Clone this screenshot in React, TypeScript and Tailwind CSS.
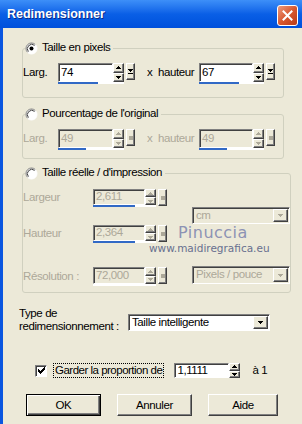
import type { ReactNode } from 'react';

const SUNKEN =
  'border border-t-[#808080] border-l-[#808080] border-r-white border-b-white shadow-[inset_1px_1px_0_#404040]';
const RAISED =
  'border border-t-white border-l-white border-r-[#404040] border-b-[#404040] shadow-[inset_-1px_-1px_0_#808080]';
const DIM = 'text-[#aca899]';

/** 5x3 pixel triangle used on spin and combo buttons. */
function Tri({ up = false, color = '#000' }: { up?: boolean; color?: string }): JSX.Element {
  const d = up ? 'M2 0h1v1h1v1h1v1H0V2h1V1h1z' : 'M0 0h5v1H4v1H3v1H2V2H1V1H0z';
  return (
    <svg width="5" height="3" viewBox="0 0 5 3" shapeRendering="crispEdges">
      <path d={d} fill={color} />
    </svg>
  );
}

function Radio({ checked = false }: { checked?: boolean }): JSX.Element {
  return (
    <svg width="13" height="13" viewBox="0 0 13 13" className="shrink-0">
      <circle cx="6.5" cy="6.5" r="5.5" fill="#fff" />
      <path d="M2.6 10.4A5.5 5.5 0 0 1 10.4 2.6" stroke="#808080" fill="none" />
      <path d="M3.4 9.6A4.4 4.4 0 0 1 9.6 3.4" stroke="#404040" fill="none" />
      <path d="M10.4 2.6A5.5 5.5 0 0 1 2.6 10.4" stroke="#fff" fill="none" />
      {checked && <circle cx="6.5" cy="6.5" r="2" fill="#000" />}
    </svg>
  );
}

interface SpinProps {
  value: string;
  boxClass: string;
  disabled?: boolean;
  bar?: number;
  popout?: boolean;
}

/** Sunken edit box with its up/down pair, the slider bar under it and the pop-out button. */
function SpinField({ value, boxClass, disabled = false, bar, popout = true }: SpinProps): JSX.Element {
  const arrow = disabled ? '#aca899' : '#000';
  return (
    <div className="flex items-start gap-[2px]">
      <div className="flex flex-col">
        <div className="flex">
          <div
            className={`flex items-center pl-[2px] leading-none ${boxClass} ${SUNKEN} ${
              disabled ? `bg-[#ece9d8] ${DIM}` : 'bg-white text-black'
            }`}
          >
            {value}
          </div>
          <div className="flex w-[11px] flex-col">
            <div className={`flex flex-1 items-center justify-center bg-[#ece9d8] ${RAISED}`}>
              <Tri up color={arrow} />
            </div>
            <div className={`flex flex-1 items-center justify-center bg-[#ece9d8] ${RAISED}`}>
              <Tri color={arrow} />
            </div>
          </div>
        </div>
        {bar !== undefined && (
          <div className="flex h-[2px] bg-white">
            <div className="h-full bg-[#3169c6]" style={{ width: `${bar}px` }} />
          </div>
        )}
      </div>
      {popout && (
        <div className={`flex h-[17px] w-[9px] flex-col items-center justify-center gap-[1px] bg-[#ece9d8] ${RAISED}`}>
          {disabled ? (
            <div className="h-[4px] w-[4px] bg-[#aca899]" />
          ) : (
            <>
              <Tri />
              <div className="h-[1px] w-[5px] bg-black" />
            </>
          )}
        </div>
      )}
    </div>
  );
}

function Combo({ value, className, disabled = false }: { value: string; className: string; disabled?: boolean }): JSX.Element {
  return (
    <div className={`flex items-center ${className} ${SUNKEN} ${disabled ? `bg-[#ece9d8] ${DIM}` : 'bg-white text-black'}`}>
      <span className="flex-1 whitespace-nowrap pl-[3px] leading-none">{value}</span>
      <div className={`mr-[1px] flex h-[calc(100%-2px)] w-[15px] items-center justify-center bg-[#ece9d8] ${RAISED}`}>
        <Tri color={disabled ? '#aca899' : '#000'} />
      </div>
    </div>
  );
}

function Group({ label, checked, className, children }: { label: string; checked?: boolean; className: string; children: ReactNode }): JSX.Element {
  return (
    <fieldset className={`ml-[3px] rounded-[3px] border border-[#d0d0bf] ${className}`}>
      <legend className="ml-[2px] pr-[3px]">
        <span className="flex h-[14px] items-center gap-[4px] whitespace-nowrap text-black">
          <Radio checked={checked} />
          {label}
        </span>
      </legend>
      {children}
    </fieldset>
  );
}

function Btn({ children, isDefault = false, className }: { children: ReactNode; isDefault?: boolean; className: string }): JSX.Element {
  return (
    <button
      type="button"
      className={`h-[22px] bg-[#ece9d8] text-black ${className} ${
        isDefault
          ? 'border border-black shadow-[inset_1px_1px_0_#fff,inset_-1px_-1px_0_#404040,inset_-2px_-2px_0_#808080]'
          : RAISED
      }`}
    >
      {children}
    </button>
  );
}

export default function App(): JSX.Element {
  return (
    <div className="flex h-[424px] w-[302px] flex-col overflow-hidden font-['Liberation_Sans',Arial,sans-serif] text-[11.5px] tracking-[-0.4px] text-black">
      {/* title bar */}
      <div className="flex h-[28px] shrink-0 items-center justify-between bg-linear-to-b from-[#3d8ff8] via-[#0a5fe6] to-[#0050dc] pl-[7px] pr-[4px]">
        <span className="text-[12.5px] font-bold tracking-normal text-white [text-shadow:1px_1px_0_#0b2a88]">
          Redimensionner
        </span>
        <div className="mt-[2px] flex h-[21px] w-[21px] items-center justify-center rounded-[3px] border border-white bg-[#d5532b] bg-linear-to-br from-[#ec9a7c] via-[#d8582f] to-[#b83a17]">
          <svg width="11" height="11" viewBox="0 0 11 11">
            <path d="M1.5 1.5l8 8M9.5 1.5l-8 8" stroke="#fff" strokeWidth="2" strokeLinecap="square" />
          </svg>
        </div>
      </div>

      {/* body */}
      <div className="flex-1 border-l-[3px] border-[#0a56e0] bg-[#ece9d8] pl-[16px] pr-[18px] pt-[13px]">
        <Group label="Taille en pixels" checked className="pb-[13px]">
          <div className="flex items-start pt-[8px]">
            <span className="w-[35px] leading-[19px]">Larg.</span>
            <SpinField value="74" boxClass="w-[55px] h-[19px]" bar={40} />
            <span className="ml-[12px] w-[52px] whitespace-nowrap leading-[19px]">x&nbsp; hauteur</span>
            <SpinField value="67" boxClass="w-[54px] h-[19px]" bar={40} />
          </div>
        </Group>

        <Group label="Pourcentage de l'original" className="mt-[9px] pb-[8px]">
          <div className={`flex items-start pt-[8px] ${DIM}`}>
            <span className="w-[35px] leading-[19px]">Larg.</span>
            <SpinField value="49" boxClass="w-[55px] h-[19px]" bar={28} disabled />
            <span className="ml-[12px] w-[52px] whitespace-nowrap leading-[19px]">x&nbsp; hauteur</span>
            <SpinField value="49" boxClass="w-[54px] h-[19px]" bar={28} disabled />
          </div>
        </Group>

        <Group label="Taille réelle / d'impression" className="relative mt-[7px] pb-[6px]">
          <div className={`flex items-start pt-[9px] ${DIM}`}>
            <div className="flex w-[157px] flex-col">
              <div className="flex items-start">
                <span className="w-[70px] leading-[16px]">Largeur</span>
                <SpinField value="2,611" boxClass="w-[52px] h-[16px]" bar={42} disabled />
              </div>
              <div className="mt-[18px] flex items-start">
                <span className="w-[70px] leading-[16px]">Hauteur</span>
                <SpinField value="2,364" boxClass="w-[52px] h-[16px]" bar={42} disabled />
              </div>
              <div className="mt-[24px] flex items-start">
                <span className="w-[70px] whitespace-nowrap leading-[18px]">Résolution :</span>
                <SpinField value="72,000" boxClass="w-[52px] h-[17px]" bar={0} disabled />
              </div>
            </div>
            <div className="ml-[12px] flex flex-col">
              <Combo value="cm" className="mt-[18px] h-[17px] w-[98px]" disabled />
              <Combo value="Pixels / pouce" className="mt-[42px] h-[18px] w-[98px]" disabled />
            </div>
          </div>
          {/* watermark stamped on the capture */}
          <span className="absolute left-[155px] top-[45px] font-['DejaVu_Sans',sans-serif] text-[16px] leading-none tracking-[0.5px] text-[#8d93b4]">
            Pinuccia
          </span>
          <span className="absolute left-[126px] top-[63px] font-['DejaVu_Sans',sans-serif] text-[10.5px] leading-none tracking-normal text-[#68708f]">
            www.maidiregrafica.eu
          </span>
        </Group>

        <div className="mt-[14px] flex items-start">
          <span className="w-[109px] whitespace-nowrap leading-[13px]">
            Type de
            <br />
            redimensionnement :
          </span>
          <Combo value="Taille intelligente" className="mt-[7px] h-[17px] w-[142px]" />
        </div>

        <div className="ml-[16px] mt-[29px] flex items-center">
          <div className={`flex h-[12px] w-[12px] items-center justify-center bg-white ${SUNKEN}`}>
            <svg width="7" height="7" viewBox="0 0 7 7" shapeRendering="crispEdges">
              <path d="M0 2h1v1h1v1h1V3h1V2h1V1h1V0h1v3H6v1H5v1H4v1H3v1H2V6H1V5H0z" fill="#000" />
            </svg>
          </div>
          <span className="ml-[6px] whitespace-nowrap border border-dotted border-black px-[1px] leading-[13px] tracking-[-0.5px]">
            Garder la proportion de
          </span>
          <div className="ml-[10px]">
            <SpinField value="1,1111" boxClass="w-[55px] h-[15px]" popout={false} />
          </div>
          <span className="ml-[12px] whitespace-nowrap">à 1</span>
        </div>

        <div className="mt-[15px] flex items-center">
          <Btn isDefault className="ml-[7px] w-[75px]">OK</Btn>
          <Btn className="ml-[16px] w-[75px]">Annuler</Btn>
          <Btn className="ml-[16px] w-[70px]">Aide</Btn>
        </div>
      </div>
    </div>
  );
}
